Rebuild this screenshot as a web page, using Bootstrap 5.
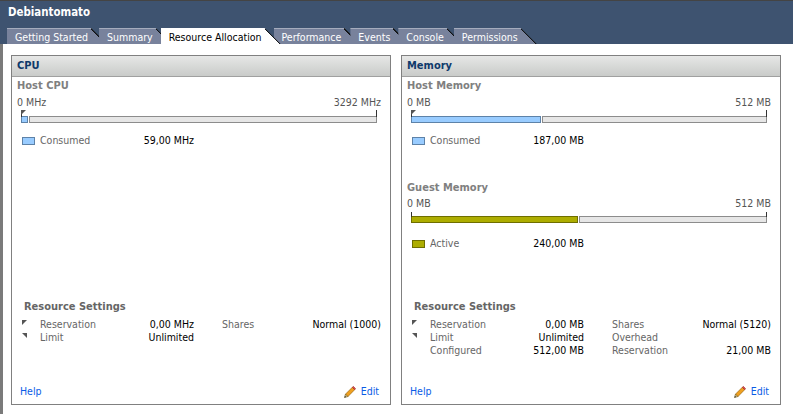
<!DOCTYPE html>
<html lang="en">
<head>
    <meta charset="UTF-8">
    <meta name="viewport" content="width=device-width, initial-scale=1.0">
    <title>Resource Allocation</title>
    <link rel="stylesheet" href="https://cdn.jsdelivr.net/npm/bootstrap@5.3.0/dist/css/bootstrap.min.css">
    <style>
        html, body { height: 415px; overflow: hidden; background: #fff; }
        body { font-family: "DejaVu Sans Condensed", "DejaVu Sans", sans-serif; font-size: 10.5px; line-height: 13px; color: #000; }
        .vm-head { height: 44px; background: #3e5370; border-top: 1px solid #444; }
        .vm-title { color: #fff; font-weight: 700; font-size: 11.4px; padding: 5px 0 0 8px; height: 27px; }
        .vm-tabs { padding-left: 7px; height: 16px; }
        .vm-tab { position: relative; height: 16px; line-height: 16px; color: #fff; border-top: 1px solid #a5acbd; padding: 0 19px 0 8px; margin-right: -8px; white-space: nowrap; clip-path: polygon(0 0, calc(100% - 16px) 0, 100% 100%, 0 100%); background: linear-gradient(#78829c, #78829c) left / calc(100% - 16px) 100% no-repeat; }
        .vm-tab:nth-child(2) { margin-right: -11px; }
        .vm-tab:nth-child(3) { margin-right: -7px; }
        .vm-tab:nth-child(4) { margin-right: -10px; }
        .vm-tab:nth-child(5) { margin-right: -11px; }
        .vm-tab:nth-child(6) { margin-right: -9px; }
        .vm-tab::after { content: ""; position: absolute; right: 0; top: -1px; width: 16px; height: 16px; background: linear-gradient(to top right, #78829c calc(50% - 1px), #111 calc(50% - 1px), #111 calc(50% + .5px), transparent calc(50% + .5px)); }
        .vm-tab.is-on { color: #000; border-top-color: #fff; background: linear-gradient(#fff, #fff) left / calc(100% - 16px) 100% no-repeat; z-index: 2; }
        .vm-tab.is-on::after { background: linear-gradient(to top right, #fff calc(50% - 1px), #111 calc(50% - 1px), #111 calc(50% + .5px), transparent calc(50% + .5px)); }
        .vm-page { height: 370px; border-left: 3px solid #7a7a7a; padding: 11px 0 0 8px; gap: 10px; }
        .vm-panel { width: 380px; height: 350px; border: 1px solid #808080; }
        .vm-panel-head { height: 21px; border-bottom: 1px solid #a0a0a0; background: linear-gradient(#e6e7e6, #c9cbc9); color: #0f3a6b; font-weight: 700; font-size: 11px; line-height: 20px; padding-left: 5px; }
        .vm-panel-body { padding: 2px 8px 6px 5px; }
        .vm-section { height: 102px; margin-right: 1px; }
        .vm-sub { color: #808080; font-weight: 700; font-size: 11px; margin-bottom: 4px; }
        .vm-range { color: #555; }
        .vm-bar { position: relative; height: 13px; margin: 1px 4px 0; align-items: flex-end; gap: 1px; }
        .vm-bar::before, .vm-bar::after { content: ""; position: absolute; top: 0; height: 7px; width: 1px; background: #333; }
        .vm-bar::before { left: 0; }
        .vm-bar::after { right: 0; }
        .vm-fill { height: 7px; flex: none; border: 1px solid #5d82a8; background: #99ccff; }
        .vm-fill.is-olive { border-color: #6e6e00; background: #adad00; }
        .vm-track { height: 7px; border: 1px solid #8c8c8c; background: #e6e6e6; }
        .vm-mark { position: absolute; left: 0; top: 0; width: 5px; height: 5px; background: #555; clip-path: polygon(0 0, 100% 0, 0 100%); z-index: 1; }
        .vm-legend { width: 172px; margin: 11px 0 0 5px; }
        .vm-swatch { width: 13px; height: 8px; margin-right: 5px; flex: none; border: 1px solid #5d82a8; background: #99ccff; }
        .vm-swatch.is-olive { border-color: #6e6e00; background: #adad00; }
        .vm-label { color: #666; }
        .vm-guest .vm-sub { margin-bottom: 3px; }
        .vm-guest .vm-bar { height: 11px; margin-top: 2px; }
        .vm-guest .vm-bar::before, .vm-guest .vm-bar::after { height: 5px; }
        .vm-guest .vm-legend { margin-top: 14px; }
        .vm-set-title { color: #666; font-weight: 700; font-size: 11px; margin: 0 0 5px 7px; }
        .vm-set { margin-left: 5px; display: grid; grid-template-columns: 18px 154px 187px; grid-auto-rows: 13px; min-height: 39px; }
        .vm-set-right { padding-left: 28px; }
        .vm-tri { width: 5px; height: 5px; margin-top: 2px; background: #555; }
        .vm-tri.is-low { clip-path: polygon(0 0, 100% 0, 0 100%); }
        .vm-tri.is-high { clip-path: polygon(0 0, 100% 0, 100% 100%); }
        .vm-foot { margin-top: 28px; padding-left: 3px; padding-right: 3px; }
        .vm-foot a { color: #0a5ce6; text-decoration: none; }
        .vm-pencil { width: 12px; height: 12px; margin-right: 5px; }
    </style>
</head>
<body>

    <!-- Title and tabs -->
    <div class="vm-head">
        <div class="vm-title">Debiantomato</div>
        <div class="vm-tabs d-flex">
            <div class="vm-tab">Getting Started</div>
            <div class="vm-tab">Summary</div>
            <div class="vm-tab is-on">Resource Allocation</div>
            <div class="vm-tab">Performance</div>
            <div class="vm-tab">Events</div>
            <div class="vm-tab">Console</div>
            <div class="vm-tab">Permissions</div>
        </div>
    </div>

    <div class="vm-page d-flex">
        <!-- CPU -->
        <div class="vm-panel d-flex flex-column">
            <div class="vm-panel-head">CPU</div>
            <div class="vm-panel-body d-flex flex-column flex-grow-1">
                <div class="vm-section">
                    <div class="vm-sub">Host CPU</div>
                    <div class="vm-range d-flex justify-content-between"><span>0 MHz</span><span>3292 MHz</span></div>
                    <div class="vm-bar d-flex">
                        <i class="vm-mark"></i>
                        <div class="vm-fill" style="width: 7px"></div>
                        <div class="vm-track flex-grow-1"></div>
                    </div>
                    <div class="vm-legend d-flex align-items-center">
                        <i class="vm-swatch"></i><span class="vm-label flex-grow-1">Consumed</span><span>59,00 MHz</span>
                    </div>
                </div>
                <div class="mt-auto">
                    <div class="vm-set-title">Resource Settings</div>
                    <div class="vm-set">
                        <i class="vm-tri is-low"></i>
                        <div class="d-flex justify-content-between"><span class="vm-label">Reservation</span><span>0,00 MHz</span></div>
                        <div class="vm-set-right d-flex justify-content-between"><span class="vm-label">Shares</span><span>Normal (1000)</span></div>
                        <i class="vm-tri is-high"></i>
                        <div class="d-flex justify-content-between"><span class="vm-label">Limit</span><span>Unlimited</span></div>
                    </div>
                    <div class="vm-foot d-flex justify-content-between">
                        <a href="#">Help</a>
                        <span class="d-flex align-items-center">
                            <svg class="vm-pencil" viewBox="0 0 12 12"><path d="M0.5 11.5l1-3.5 2.5 2.5z" fill="#e8d6a0" stroke="#5a4a10" stroke-width=".6"/><path d="M0.5 11.5l.5-1.6 1.1 1.1z" fill="#222"/><path d="M1.6 8L8.3 1.3l2.4 2.4L4 10.5z" fill="#f0a020" stroke="#8a5a08" stroke-width=".6"/><path d="M8.3 1.3l1-1 2.4 2.4-1 1z" fill="#e04848" stroke="#8a2020" stroke-width=".5"/></svg>
                            <a href="#">Edit</a>
                        </span>
                    </div>
                </div>
            </div>
        </div>

        <!-- Memory -->
        <div class="vm-panel d-flex flex-column">
            <div class="vm-panel-head">Memory</div>
            <div class="vm-panel-body d-flex flex-column flex-grow-1">
                <div class="vm-section">
                    <div class="vm-sub">Host Memory</div>
                    <div class="vm-range d-flex justify-content-between"><span>0 MB</span><span>512 MB</span></div>
                    <div class="vm-bar d-flex">
                        <i class="vm-mark"></i>
                        <div class="vm-fill" style="width: 36.5%"></div>
                        <div class="vm-track flex-grow-1"></div>
                    </div>
                    <div class="vm-legend d-flex align-items-center">
                        <i class="vm-swatch"></i><span class="vm-label flex-grow-1">Consumed</span><span>187,00 MB</span>
                    </div>
                </div>
                <div class="vm-section vm-guest">
                    <div class="vm-sub">Guest Memory</div>
                    <div class="vm-range d-flex justify-content-between"><span>0 MB</span><span>512 MB</span></div>
                    <div class="vm-bar d-flex">
                        <div class="vm-fill is-olive" style="width: 46.9%"></div>
                        <div class="vm-track flex-grow-1"></div>
                    </div>
                    <div class="vm-legend d-flex align-items-center">
                        <i class="vm-swatch is-olive"></i><span class="vm-label flex-grow-1">Active</span><span>240,00 MB</span>
                    </div>
                </div>
                <div class="mt-auto">
                    <div class="vm-set-title">Resource Settings</div>
                    <div class="vm-set">
                        <i class="vm-tri is-low"></i>
                        <div class="d-flex justify-content-between"><span class="vm-label">Reservation</span><span>0,00 MB</span></div>
                        <div class="vm-set-right d-flex justify-content-between"><span class="vm-label">Shares</span><span>Normal (5120)</span></div>
                        <i class="vm-tri is-high"></i>
                        <div class="d-flex justify-content-between"><span class="vm-label">Limit</span><span>Unlimited</span></div>
                        <div class="vm-set-right"><span class="vm-label">Overhead</span></div>
                        <i></i>
                        <div class="d-flex justify-content-between"><span class="vm-label">Configured</span><span>512,00 MB</span></div>
                        <div class="vm-set-right d-flex justify-content-between"><span class="vm-label">Reservation</span><span>21,00 MB</span></div>
                    </div>
                    <div class="vm-foot d-flex justify-content-between">
                        <a href="#">Help</a>
                        <span class="d-flex align-items-center">
                            <svg class="vm-pencil" viewBox="0 0 12 12"><path d="M0.5 11.5l1-3.5 2.5 2.5z" fill="#e8d6a0" stroke="#5a4a10" stroke-width=".6"/><path d="M0.5 11.5l.5-1.6 1.1 1.1z" fill="#222"/><path d="M1.6 8L8.3 1.3l2.4 2.4L4 10.5z" fill="#f0a020" stroke="#8a5a08" stroke-width=".6"/><path d="M8.3 1.3l1-1 2.4 2.4-1 1z" fill="#e04848" stroke="#8a2020" stroke-width=".5"/></svg>
                            <a href="#">Edit</a>
                        </span>
                    </div>
                </div>
            </div>
        </div>
    </div>

    <script src="https://cdn.jsdelivr.net/npm/bootstrap@5.3.0/dist/js/bootstrap.bundle.min.js"></script>
</body>
</html>
